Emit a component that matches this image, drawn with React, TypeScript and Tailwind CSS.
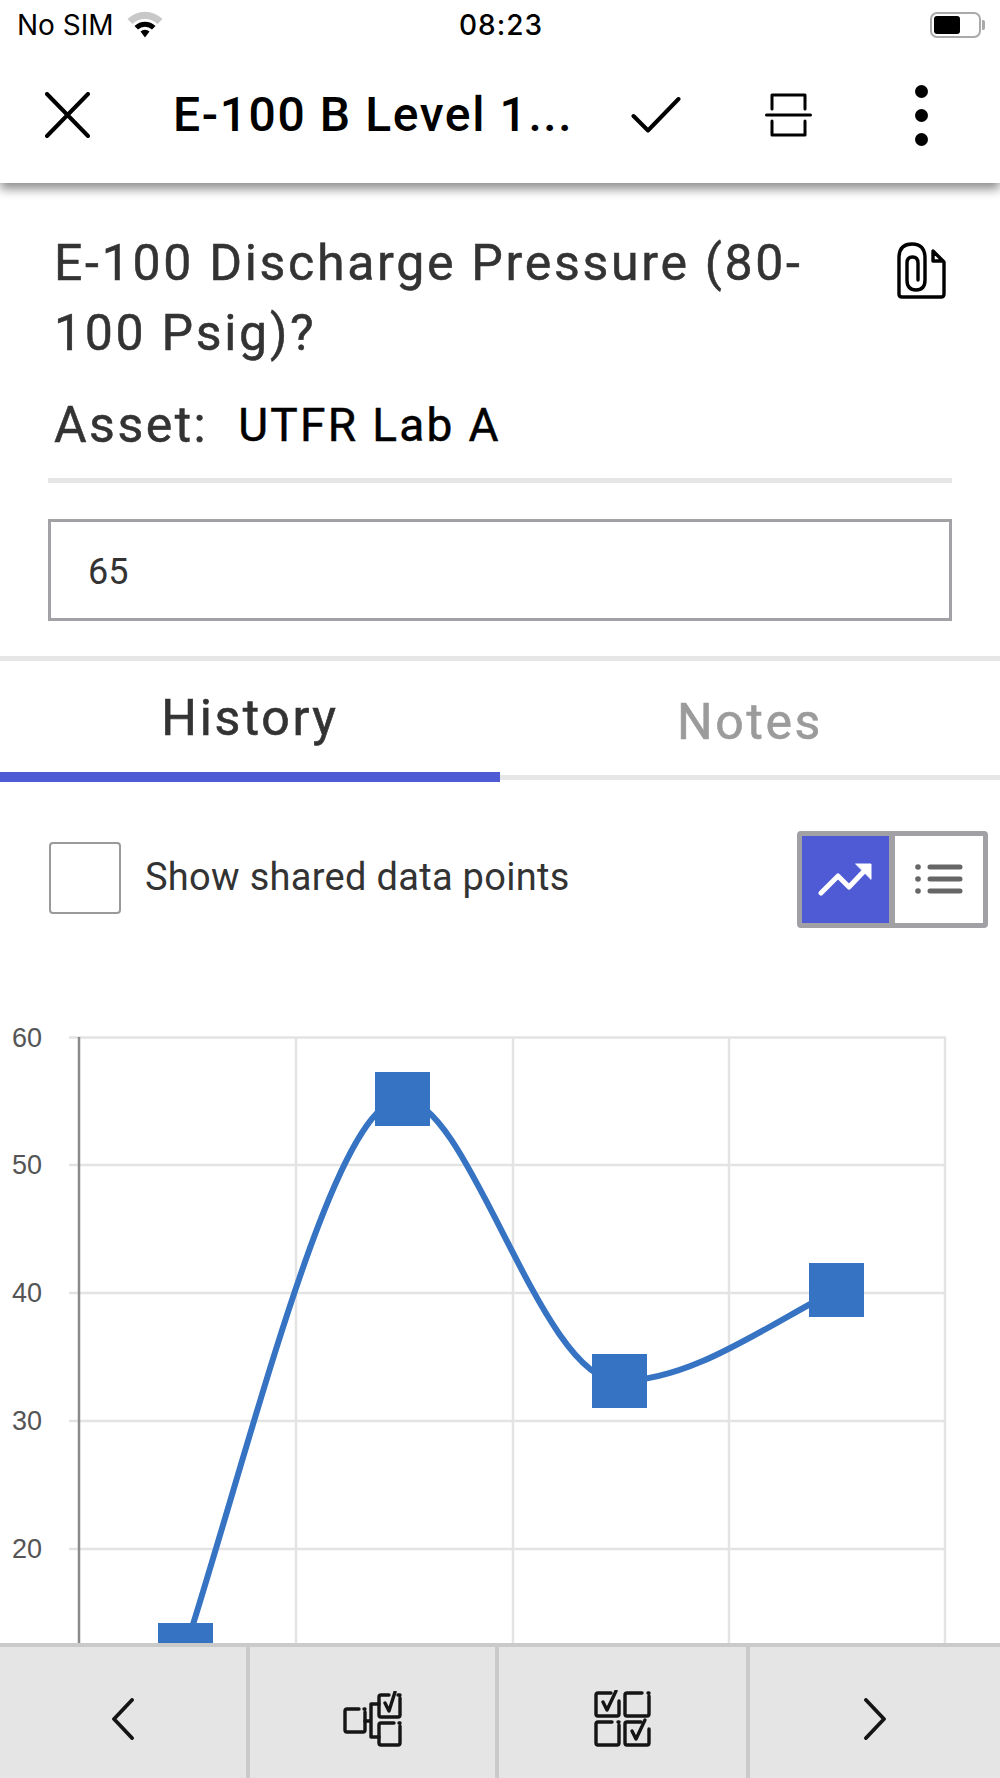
const Wifi = () => (
  <svg width="36" height="28" viewBox="0 0 36 28" className="ml-[13px] -mt-[2px]">
    <path d="M0.5 9 A25 25 0 0 1 35.5 9 L30.5 14 A18 18 0 0 0 5.5 14Z" fill="#c8c8c8" />
    <path d="M7.5 16 A15 15 0 0 1 28.5 16 L25 19.5 A10 10 0 0 0 11 19.5Z" fill="#000" />
    <path d="M13.5 21.5 A6.5 6.5 0 0 1 22.5 21.5 L18 27.5Z" fill="#000" />
  </svg>
);

const Ico = ({ w, h, vb, children }: { w: number; h: number; vb: string; children: React.ReactNode }) => (
  <svg width={w} height={h} viewBox={vb} fill="none" stroke="currentColor" strokeLinecap="round" strokeLinejoin="round" className="block">
    {children}
  </svg>
);

const yTicks = [
  { l: '60', y: 107.5 },
  { l: '50', y: 235 },
  { l: '40', y: 363 },
  { l: '30', y: 491 },
  { l: '20', y: 619 },
];

const Chart = () => (
  <svg width="1000" height="713" viewBox="0 0 1000 713" className="block mt-[2px]">
    {yTicks.map((t) => (
      <g key={t.l}>
        <line x1="69" x2="946" y1={t.y} y2={t.y} stroke="#e3e3e3" strokeWidth="2.5" />
        <text x="12" y={t.y + 9} fontSize="27" fill="#555" fontFamily="'Liberation Sans', sans-serif">{t.l}</text>
      </g>
    ))}
    {[296, 513, 729, 945].map((x) => (
      <line key={x} x1={x} x2={x} y1="107" y2="713" stroke="#e3e3e3" strokeWidth="2.5" />
    ))}
    <line x1="79" x2="79" y1="107" y2="713" stroke="#8a8a8a" strokeWidth="2.5" />
    <path
      d="M185 720 C 255 500 335 169 402 169 C 470 169 540 451 619 451 C 690 451 760 400 836 360"
      fill="none"
      stroke="#3673c3"
      strokeWidth="6"
    />
    <rect x="375" y="142" width="55" height="54" fill="#3673c3" />
    <rect x="592" y="424" width="55" height="54" fill="#3673c3" />
    <rect x="809" y="333" width="55" height="54" fill="#3673c3" />
    <rect x="158" y="693" width="55" height="54" fill="#3673c3" />
  </svg>
);

export default function App() {
  return (
    <div className="w-[1000px] h-[1778px] bg-white flex flex-col overflow-hidden font-['Roboto',sans-serif] text-[#333]">
      <div className="relative z-10 h-[183px] shrink-0 bg-white shadow-[0_6px_10px_rgba(0,0,0,0.45)]">
        <div className="h-[50px] flex items-center justify-between pl-[17px] pr-[15px] text-black">
          <div className="flex items-center w-[200px]">
            <span className="text-[28px] leading-none font-['Inter',sans-serif]">No SIM</span>
            <Wifi />
          </div>
          <span className="text-[28px] leading-none font-medium font-['Inter',sans-serif] tracking-[1px]">08:23</span>
          <div className="w-[200px] flex justify-end items-center">
            <div className="w-[51px] h-[26px] border-2 border-[#aaa] rounded-[7px] p-[2px]">
              <div className="w-[26px] h-full bg-black rounded-[3px]" />
            </div>
            <div className="w-[3px] h-[10px] bg-[#aaa] rounded-r-[2px] ml-[1px]" />
          </div>
        </div>
        <div className="h-[133px] flex items-center pb-[3px] text-black">
          <div className="w-[173px] pl-[45px] shrink-0">
            <Ico w={45} h={46} vb="0 0 45 46">
              <path d="M2 2 L43 44 M43 2 L2 44" strokeWidth="4" />
            </Ico>
          </div>
          <div className="w-[458px] shrink-0 text-[48px] leading-none font-medium tracking-[1.6px] whitespace-nowrap">E-100 B Level 1...</div>
          <div className="w-[134px] shrink-0">
            <Ico w={50} h={36} vb="0 0 50 36">
              <path d="M2.5 19 L17 33.5 L47.5 2" strokeWidth="4" />
            </Ico>
          </div>
          <div className="w-[150px] shrink-0">
            <Ico w={47} h={44} vb="0 0 47 44">
              <path d="M7 16 V2 H40 V16 M1.5 22 H45.5 M7 28 V42 H40 V28" strokeWidth="3" />
            </Ico>
          </div>
          <div className="flex flex-col gap-[11px]">
            <div className="w-[13px] h-[13px] rounded-full bg-black" />
            <div className="w-[13px] h-[13px] rounded-full bg-black" />
            <div className="w-[13px] h-[13px] rounded-full bg-black" />
          </div>
        </div>
      </div>

      <div className="flex-1 min-h-0 overflow-hidden">
        <div className="px-[48px] pt-[45px] relative">
          <div className="pl-[6px] w-[790px] text-[50px] leading-[70px] tracking-[2.7px] text-[#333] [-webkit-text-stroke:0.5px_#333]">E-100 Discharge Pressure (80-<br />100 Psig)?</div>
          <div className="absolute left-[896px] top-[59px] text-black">
            <Ico w={50} h={58} vb="0 0 50 58">
              <path d="M22 38 V21 Q22 15 16.5 15 Q11 15 11 21 V38 Q11 48 20 48 Q29 48 29 38 V16 Q29 2 16 2 Q3 2 3 16 V52 Q3 55 6 55 H45 Q48 55 48 52 V20" strokeWidth="3.4" />
              <path d="M37 9 L47 19 H37 Z" strokeWidth="3.4" />
            </Ico>
          </div>
          <div className="pl-[6px] h-[70px] flex items-center text-[50px] tracking-[2.5px] text-[#333] mt-[22px] [-webkit-text-stroke:0.5px_#333]">
            <span>Asset:</span>
            <span className="ml-[30px] text-[46px] tracking-[2.3px] text-black [-webkit-text-stroke:0.5px_#000]">UTFR Lab A</span>
          </div>
          <div className="h-[5px] bg-[#e6e6e6] w-[904px] mt-[18px]" />
          <div className="mt-[36px] h-[102px] w-[904px] border-[3px] border-[#a2a2a6] flex items-center pl-[37px] pt-[3px] text-[36px] text-[#333]">65</div>
        </div>

        <div className="h-[5px] bg-[#e6e6e6] mt-[35px]" />
        <div className="h-[121px] flex">
          <div className="w-[500px] flex flex-col">
            <div className="flex-1 flex items-center justify-center pt-[4px] text-[50px] tracking-[2.6px] text-[#333] [-webkit-text-stroke:0.6px_#333]">History</div>
            <div className="h-[10px] bg-[#4f5bd5]" />
          </div>
          <div className="w-[500px] flex flex-col">
            <div className="flex-1 flex items-center justify-center text-[50px] tracking-[2.6px] text-[#9b9b9b] pt-[8px] [-webkit-text-stroke:0.6px_#9b9b9b]">Notes</div>
            <div className="h-[5px] bg-[#e6e6e6] mb-[2px]" />
          </div>
        </div>

        <div className="flex items-center pl-[49px] pr-[12px] mt-[49px] h-[97px]">
          <div className="w-[72px] h-[72px] border-2 border-[#9a9a9a] rounded-[4px] shrink-0 mb-[4px]" />
          <div className="ml-[24px] text-[38px] tracking-[0.3px] text-[#333] flex-1 mb-[5px]">Show shared data points</div>
          <div className="w-[191px] h-[97px] border-[5px] border-[#a0a0a5] rounded-[4px] flex -mt-[1px]">
            <div className="w-[87px] bg-[#4f5bd5] flex items-center justify-center">
              <Ico w={56} h={34} vb="0 0 56 34">
                <path d="M3 31 L20 14 L31 25 L50 5" stroke="#fff" strokeWidth="5" />
                <path d="M38 2 H53 V17 Z" fill="#fff" stroke="#fff" strokeWidth="1" />
              </Ico>
            </div>
            <div className="w-[6px] bg-[#a0a0a5]" />
            <div className="flex-1 flex items-center justify-center">
              <Ico w={48} h={30} vb="0 0 48 30">
                <g stroke="#666" strokeWidth="5">
                  <path d="M15 3 H45 M15 15 H45 M15 27 H45" />
                </g>
                <g fill="#666" stroke="none">
                  <circle cx="3" cy="3" r="2.8" />
                  <circle cx="3" cy="15" r="2.8" />
                  <circle cx="3" cy="27" r="2.8" />
                </g>
              </Ico>
            </div>
          </div>
        </div>
        <Chart />
      </div>

      <div className="h-[135px] shrink-0 bg-[#e5e5e5] border-t-[4px] border-[#cacaca] flex text-[#151515]">
        <div className="w-[250px] pt-[12px] flex items-center justify-center border-r-[4px] border-[#cacaca]">
          <Ico w={24} h={42} vb="0 0 24 42">
            <path d="M21 2 L3 21 L21 40" strokeWidth="3.8" />
          </Ico>
        </div>
        <div className="w-[249px] pt-[12px] flex items-center justify-center border-r-[4px] border-[#cacaca]">
          <Ico w={60} h={56} vb="0 0 60 56">
            <g strokeWidth="3.4">
              <path d="M16 18 H4 Q2 18 2 20 V39 Q2 41 4 41 H20 Q22 41 22 39 V21 M21 18 H22" />
              <path d="M46 4 H38 Q36 4 36 6 V24 Q36 26 38 26 H55 Q57 26 57 24 V7 M55 4 H57" />
              <path d="M51 32 H38 Q36 32 36 34 V52 Q36 54 38 54 H55 Q57 54 57 52 V35 M56 32 H57" />
              <path d="M22 30 H28 M28 13 V46 M28 13 H36 M28 46 H36" />
              <path d="M42 12 L46 20 L52 1" />
            </g>
          </Ico>
        </div>
        <div className="w-[251px] pt-[12px] flex items-center justify-center border-r-[4px] border-[#cacaca]">
          <Ico w={58} h={57} vb="0 0 58 57">
            <g strokeWidth="3.4">
              <path d="M17 3 H4 Q2 3 2 5 V24 Q2 26 4 26 H23 Q25 26 25 24 V11" />
              <path d="M48 3 H33 Q31 3 31 5 V24 Q31 26 33 26 H53 Q55 26 55 24 V6 M54 3 H55" />
              <path d="M18 32 H4 Q2 32 2 34 V53 Q2 55 4 55 H23 Q25 55 25 53 V35 M24 32 H25" />
              <path d="M47 32 H33 Q31 32 31 34 V53 Q31 55 33 55 H53 Q55 55 55 53 V39" />
              <path d="M9 12 L13 20 L22 1" />
              <path d="M38 41 L42 49 L51 30" />
            </g>
          </Ico>
        </div>
        <div className="flex-1 pt-[12px] flex items-center justify-center">
          <Ico w={24} h={42} vb="0 0 24 42">
            <path d="M3 2 L21 21 L3 40" strokeWidth="3.8" />
          </Ico>
        </div>
      </div>
    </div>
  );
}
